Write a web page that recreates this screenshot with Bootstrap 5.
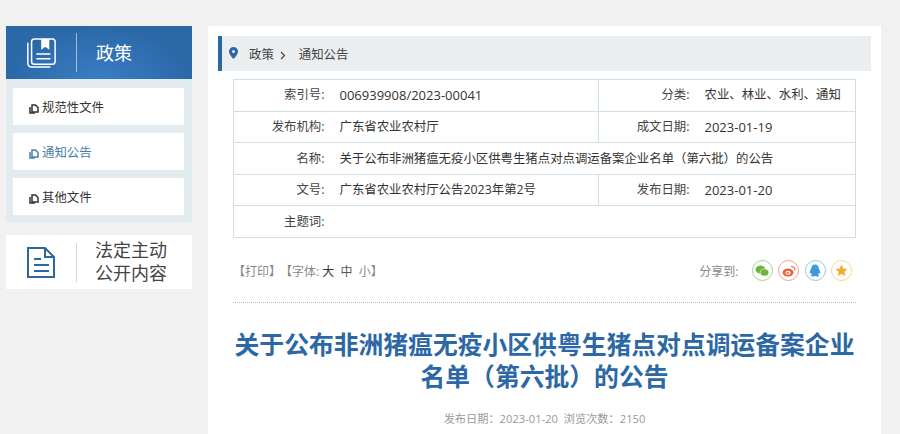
<!DOCTYPE html>
<html lang="zh-CN">
<head>
  <meta charset="UTF-8">
  <meta name="viewport" content="width=device-width, initial-scale=1.0">
  <title>通知公告</title>
  <link href="https://cdn.jsdelivr.net/npm/bootstrap@5.3.0/dist/css/bootstrap.min.css" rel="stylesheet">
  <style>
    html, body { height: 434px; overflow: hidden; }
    body {
      background-color: #f1f1f1;
      font-family: "Open Sans", "Noto Sans CJK SC", sans-serif;
      font-size: 12.4px;
      color: #333;
    }
    .page-wrap { padding: 26px 19px 0 6px; gap: 16px; height: 434px; }
    .side-col { width: 186px; flex: none; }
    .side-head {
      height: 53px;
      background: radial-gradient(ellipse at 50% 110%, #3a7fc4 0%, #2b68a8 70%);
      color: #fff;
      font-size: 18px;
    }
    .side-head .head-icon { width: 70px; padding-left: 19px; }
    .head-rule { width: 1px; height: 39px; background: rgba(255,255,255,.55); flex: none; }
    .head-label { padding: 2px 0 0 19px; }
    .side-list { background: #e2ebf0; padding: 9px 8px 7px 7px; gap: 8px; }
    .side-link { height: 37px; background: #fff; color: #333; padding: 4px 0 0 16px; text-decoration: none; gap: 3px; }
    .side-link.cur { color: #4a7ea8; }
    .open-box { height: 54px; margin-top: 13px; background: #fff; }
    .open-box .head-icon { width: 70px; padding-left: 20px; }
    .open-box .head-rule { background: #d5d5d5; }
    .open-text { padding-left: 18px; font-size: 18px; line-height: 23px; color: #444; }
    .main-col { background: #fff; padding: 10px 10px 0; }
    .crumb-bar { height: 35px; background: #ebeef0; border-left: 4px solid #2b68a0; padding: 4px 0 0 7px; color: #444; }
    .crumb-pin { margin: 0 11px 6px 0; }
    .crumb-sep { margin: 0 13px 0 6px; }
    .info-wrap { margin: 8px 15px 0; }
    .info-table { width: 623px; table-layout: fixed; border-collapse: collapse; border: 1px solid #cfdfe4; }
    .info-table tr { border-bottom: 1px solid #cfdfe4; }
    .info-table td { height: 31.6px; padding: 1px 0 0; vertical-align: middle; white-space: nowrap; }
    .info-table .lbl { text-align: right; padding-right: 15px; color: #444; }
    .info-table .val { color: #333; }
    .info-table .mid-rule { border-right: 1px solid #cfdfe4; }
    .num-text { font-size: 13px; }
    .tool-row { height: 65px; border-bottom: 1px dotted #bbb; color: #888; font-size: 12px; padding: 2px 4px 0 0; }
    .tool-row .size-big { color: #333; }
    .tool-row .size-mid { color: #555; }
    .tool-text { padding-top: 3px; }
    .size-group { margin-left: 5px; }
    .share-ico { width: 21px; height: 21px; border-radius: 50%; border: 1px solid; background: #fff; }
    .share-list { gap: 5.500px; margin-left: 13px; }
    .news-title { color: #2b68a5; font-size: 24.8px; line-height: 32px; font-weight: 700; margin: 25px 0 0; text-align: center; }
    .news-meta { color: #999; font-size: 11.2px; text-align: center; margin-top: 19px; }
  </style>
</head>
<body>
  <div class="page-wrap d-flex align-items-start">
    <div class="side-col">
      <div class="side-head d-flex align-items-center">
        <div class="head-icon">
          <svg width="32" height="32" viewBox="0 0 32 34" fill="none" stroke="#fff" stroke-width="1.6">
            <path d="M2 6v22a4 4 0 0 0 4 4h20"/>
            <rect x="6" y="2" width="25" height="27" rx="3"/>
            <path d="M17 2v10l3.500-2.500L24 12V2" fill="#fff"/>
            <path d="M11 18h15M11 23h15"/>
          </svg>
        </div>
        <div class="head-rule"></div>
        <div class="head-label">政策</div>
      </div>
      <div class="side-list d-flex flex-column">
        <a class="side-link d-flex align-items-center" href="#"><svg width="10" height="10" viewBox="0 0 10 10" fill="none" stroke="currentColor" stroke-width="1.500"><path d="M3 1h3.500L9 3.500V8H3z"/><path d="M1 3v6h5"/></svg>规范性文件</a>
        <a class="side-link cur d-flex align-items-center" href="#"><svg width="10" height="10" viewBox="0 0 10 10" fill="none" stroke="currentColor" stroke-width="1.500"><path d="M3 1h3.500L9 3.500V8H3z"/><path d="M1 3v6h5"/></svg>通知公告</a>
        <a class="side-link d-flex align-items-center" href="#"><svg width="10" height="10" viewBox="0 0 10 10" fill="none" stroke="currentColor" stroke-width="1.500"><path d="M3 1h3.500L9 3.500V8H3z"/><path d="M1 3v6h5"/></svg>其他文件</a>
      </div>
      <div class="open-box d-flex align-items-center">
        <div class="head-icon">
          <svg width="30" height="33" viewBox="0 0 30 33" fill="none" stroke="#2b68a0" stroke-width="2">
            <path d="M2 2h17l9 9v20H2z"/>
            <path d="M19 2v9h9"/>
            <path d="M8 13h7M8 19h15M8 25h15"/>
          </svg>
        </div>
        <div class="head-rule"></div>
        <div class="open-text">法定主动<br>公开内容</div>
      </div>
    </div>

    <div class="main-col flex-grow-1 h-100">
      <div class="crumb-bar d-flex align-items-center">
        <svg class="crumb-pin" width="9" height="12" viewBox="0 0 9 12"><path fill="#2b68a0" fill-rule="evenodd" d="M4.500 0a4.500 4.500 0 0 1 4.500 4.500C9 7.500 4.500 12 4.500 12S0 7.500 0 4.500A4.500 4.500 0 0 1 4.500 0zm0 3a1.500 1.500 0 1 0 0 3 1.500 1.500 0 0 0 0-3z"/></svg>
        <span>政策</span>
        <span class="crumb-sep"><svg width="6" height="9" viewBox="0 0 6 9" fill="none" stroke="#444" stroke-width="1.200"><path d="M1 1l3.500 3.500L1 8"/></svg></span>
        <span>通知公告</span>
      </div>
      <div class="info-wrap">
        <table class="info-table">
          <colgroup><col style="width:106px"><col style="width:259px"><col style="width:106px"><col></colgroup>
          <tr><td class="lbl">索引号:</td><td class="val mid-rule num-text">006939908/2023-00041</td><td class="lbl">分类:</td><td class="val">农业、林业、水利、通知</td></tr>
          <tr><td class="lbl">发布机构:</td><td class="val mid-rule">广东省农业农村厅</td><td class="lbl">成文日期:</td><td class="val num-text">2023-01-19</td></tr>
          <tr><td class="lbl">名称:</td><td class="val" colspan="3">关于公布非洲猪瘟无疫小区供粤生猪点对点调运备案企业名单（第六批）的公告</td></tr>
          <tr><td class="lbl">文号:</td><td class="val mid-rule">广东省农业农村厅公告2023年第2号</td><td class="lbl">发布日期:</td><td class="val num-text">2023-01-20</td></tr>
          <tr><td class="lbl">主题词:</td><td class="val" colspan="3"></td></tr>
        </table>
        <div class="tool-row d-flex align-items-center justify-content-between">
          <div class="tool-text">【打印】<span class="size-group">【字体: <span class="size-big">大</span>&nbsp; <span class="size-mid">中</span>&nbsp; 小】</span></div>
          <div class="d-flex align-items-center">
            <span class="tool-text">分享到:</span>
            <div class="share-list d-flex">
              <span class="share-ico d-flex align-items-center justify-content-center" style="border-color:#a4d28a"><svg width="14" height="12" viewBox="0 0 14 12"><ellipse cx="5.500" cy="4.500" rx="5" ry="4" fill="#6cb33f"/><ellipse cx="9.500" cy="7.500" rx="4.300" ry="3.500" fill="#6cb33f" stroke="#fff" stroke-width=".6"/></svg></span>
              <span class="share-ico d-flex align-items-center justify-content-center" style="border-color:#f2a084"><svg width="14" height="12" viewBox="0 0 14 12"><ellipse cx="6" cy="7.500" rx="5.500" ry="4" fill="#e8623a"/><ellipse cx="6" cy="7.700" rx="2.600" ry="2" fill="#fff"/><circle cx="5.800" cy="7.800" r="1.100" fill="#e8623a"/><path d="M9 1.500a3.500 3.500 0 0 1 4 4" fill="none" stroke="#e8623a" stroke-width="1.100"/></svg></span>
              <span class="share-ico d-flex align-items-center justify-content-center" style="border-color:#8cc8ec"><svg width="12" height="14" viewBox="0 0 12 14"><path fill="#3d9bd9" d="M6 .5c2.500 0 3.800 2 3.800 4.300 1 1.300 1.800 3.200 1.500 4.700-.5.300-1-.3-1.300-.8-.2 1-.6 1.600-1 2 .8.300 1.200.8 1 1.300-.3.600-2.800.6-4 0-1.200.6-3.700.6-4 0-.2-.5.200-1 1-1.300-.4-.4-.8-1-1-2-.3.500-.8 1.100-1.300.8C.4 8 1.200 6.100 2.200 4.800 2.200 2.500 3.500.5 6 .5z"/></svg></span>
              <span class="share-ico d-flex align-items-center justify-content-center" style="border-color:#f7d68c"><svg width="13" height="13" viewBox="0 0 13 13"><path fill="#f0ad2e" d="M6.500.5l1.800 3.900 4.200.5-3.100 2.900.8 4.200-3.700-2.100-3.700 2.100.8-4.200L.5 4.900l4.200-.5z"/></svg></span>
            </div>
          </div>
        </div>
        <h1 class="news-title">关于公布非洲猪瘟无疫小区供粤生猪点对点调运备案企业名单（第六批）的公告</h1>
        <div class="news-meta">发布日期：2023-01-20&nbsp; 浏览次数：2150</div>
      </div>
    </div>
  </div>
  <script src="https://cdn.jsdelivr.net/npm/bootstrap@5.3.0/dist/js/bootstrap.bundle.min.js"></script>
</body>
</html>
